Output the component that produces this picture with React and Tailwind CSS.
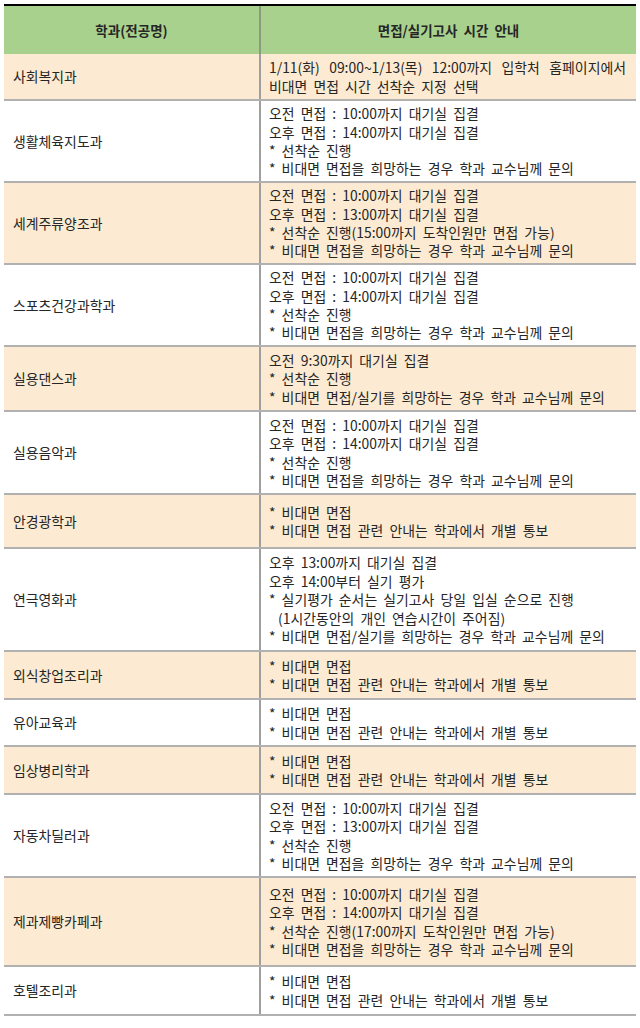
import React from "react";

const HEAD = "오전 면접 : 10:00까지 대기실 집결";
const AFT14 = "오후 면접 : 14:00까지 대기실 집결";
const AFT13 = "오후 면접 : 13:00까지 대기실 집결";
const FIRST = "* 선착순 진행";
const ASK = "* 비대면 면접을 희망하는 경우 학과 교수님께 문의";
const ASK2 = "* 비대면 면접/실기를 희망하는 경우 학과 교수님께 문의";
const ONLINE = ["* 비대면 면접", "* 비대면 면접 관련 안내는 학과에서 개별 통보"];

const rows = [
  {
    name: "사회복지과",
    h: "h-[47px]",
    lines: [
      { t: "1/11(화) 09:00~1/13(목) 12:00까지 입학처 홈페이지에서", justify: true },
      "비대면 면접 시간 선착순 지정 선택",
    ],
  },
  { name: "생활체육지도과", h: "h-[82px]", lines: [HEAD, AFT14, FIRST, ASK] },
  {
    name: "세계주류양조과",
    h: "h-[82px]",
    lines: [HEAD, AFT13, "* 선착순 진행(15:00까지 도착인원만 면접 가능)", ASK],
  },
  { name: "스포츠건강과학과", h: "h-[82px]", lines: [HEAD, AFT14, FIRST, ASK] },
  {
    name: "실용댄스과",
    h: "h-[65px]",
    lines: ["오전 9:30까지 대기실 집결", FIRST, ASK2],
  },
  { name: "실용음악과", h: "h-[83px]", lines: [HEAD, AFT14, FIRST, ASK] },
  { name: "안경광학과", h: "h-[54px]", lines: ONLINE },
  {
    name: "연극영화과",
    h: "h-[103px]",
    lines: [
      "오후 13:00까지 대기실 집결",
      "오후 14:00부터 실기 평가",
      "* 실기평가 순서는 실기고사 당일 입실 순으로 진행",
      { t: "(1시간동안의 개인 연습시간이 주어짐)", indent: true },
      ASK2,
    ],
  },
  { name: "외식창업조리과", h: "h-[48px]", lines: ONLINE },
  { name: "유아교육과", h: "h-[47px]", lines: ONLINE },
  { name: "임상병리학과", h: "h-[48px]", lines: ONLINE },
  { name: "자동차딜러과", h: "h-[83px]", lines: [HEAD, AFT13, FIRST, ASK] },
  {
    name: "제과제빵카페과",
    h: "h-[89px]",
    lines: [HEAD, AFT14, "* 선착순 진행(17:00까지 도착인원만 면접 가능)", ASK],
  },
  { name: "호텔조리과", h: "h-[49px]", lines: ONLINE },
];

function Line({ line }) {
  if (typeof line === "string") return <div className="whitespace-nowrap">{line}</div>;
  if (line.justify)
    return <div className="text-justify [text-align-last:justify]">{line.t}</div>;
  return <div className="pl-[9px] whitespace-nowrap">{line.t}</div>;
}

export default function App() {
  return (
    <div className="bg-white min-h-[1028px] pt-[4px] px-[4px] font-['Noto_Sans_CJK_KR','Noto_Sans',sans-serif] text-[13.9px] text-[#262626] [word-spacing:3px]">
      <div className="w-[632px] border-t-2 border-black">
        <div className="grid grid-cols-[257px_1fr] h-[48px] bg-[#a9d18e] font-bold text-[13.5px]">
          <div className="flex items-center justify-center border-r-2 border-[#8c9a82]">
            학과(전공명)
          </div>
          <div className="flex items-center justify-center">면접/실기고사 시간 안내</div>
        </div>

        {rows.map((row, i) => (
          <div
            key={row.name}
            className={`grid grid-cols-[257px_1fr] border-b-2 border-[#b1b1b1] ${row.h} ${
              i % 2 === 0 ? "bg-[#fcebd2]" : "bg-white"
            }`}
          >
            <div className="flex items-center pl-[9px] border-r-2 border-[#9f9f9f]">
              {row.name}
            </div>
            <div className="flex flex-col justify-center pl-[8px] pr-[10px] leading-[18.4px]">
              {row.lines.map((line, j) => (
                <Line key={j} line={line} />
              ))}
            </div>
          </div>
        ))}
      </div>
    </div>
  );
}
